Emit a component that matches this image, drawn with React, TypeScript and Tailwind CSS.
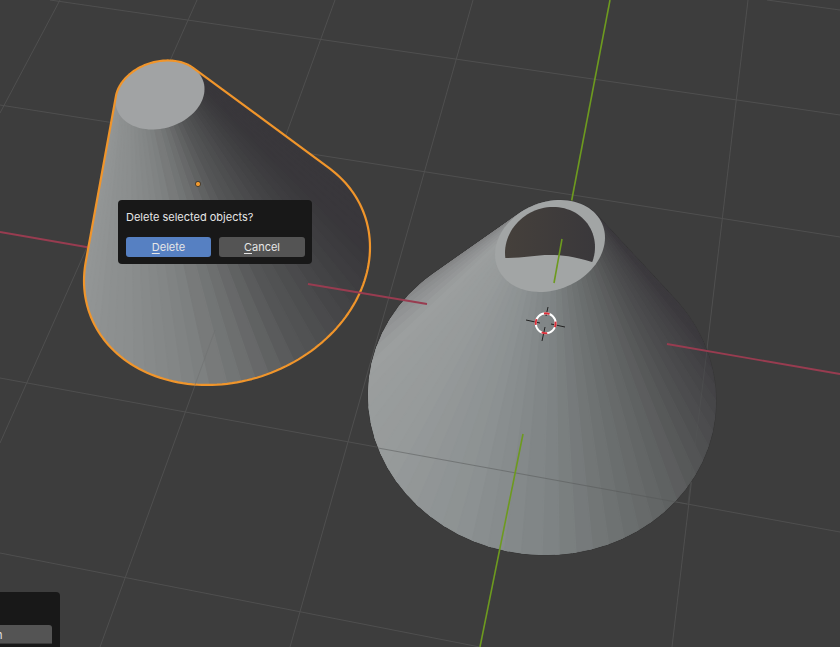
import React from "react";

type Pt = [number, number];
type Ell = { cx: number; cy: number; a: number; b: number; c: number };
type Stop = [number, number, number, number];

const at = (e: Ell, t: number): Pt => [e.cx + e.a * Math.cos(t), e.cy + e.b * Math.cos(t) + e.c * Math.sin(t)];

const ellipsePath = (e: Ell) => {
  const pts: string[] = [];
  for (let i = 0; i < 96; i++) {
    const [x, y] = at(e, (i / 96) * Math.PI * 2);
    pts.push(`${x.toFixed(2)},${y.toFixed(2)}`);
  }
  return pts.join(" ");
};

// monotone chain, gives the outline of the cone
const hull = (points: Pt[]) => {
  const p = [...points].sort((u, v) => u[0] - v[0] || u[1] - v[1]);
  const cross = (o: Pt, u: Pt, v: Pt) => (u[0] - o[0]) * (v[1] - o[1]) - (u[1] - o[1]) * (v[0] - o[0]);
  const lo: Pt[] = [];
  for (const q of p) {
    while (lo.length > 1 && cross(lo[lo.length - 2], lo[lo.length - 1], q) <= 0) lo.pop();
    lo.push(q);
  }
  const up: Pt[] = [];
  for (const q of [...p].reverse()) {
    while (up.length > 1 && cross(up[up.length - 2], up[up.length - 1], q) <= 0) up.pop();
    up.push(q);
  }
  return [...lo.slice(0, -1), ...up.slice(0, -1)].map((q) => `${q[0].toFixed(2)},${q[1].toFixed(2)}`).join(" ");
};

const shade = (stops: Stop[], deg: number) => {
  let d = deg;
  while (d < -60) d += 360;
  while (d >= 300) d -= 360;
  for (let i = 0; i < stops.length - 1; i++) {
    const [d0, r0, g0, b0] = stops[i];
    const [d1, r1, g1, b1] = stops[i + 1];
    if (d >= d0 && d <= d1) {
      const k = (d - d0) / (d1 - d0);
      return `rgb(${Math.round(r0 + (r1 - r0) * k)},${Math.round(g0 + (g1 - g0) * k)},${Math.round(b0 + (b1 - b0) * k)})`;
    }
  }
  return "rgb(58,56,60)";
};

const leftStops: Stop[] = [
  [-60, 58, 56, 60],
  [5, 57, 55, 59],
  [30, 66, 66, 68],
  [60, 85, 86, 87],
  [80, 107, 109, 109],
  [100, 127, 130, 130],
  [130, 138, 141, 141],
  [160, 145, 148, 148],
  [195, 152, 155, 155],
  [240, 120, 120, 122],
  [300, 58, 56, 60],
];

const rightStops: Stop[] = [
  [-60, 60, 58, 62],
  [-20, 60, 58, 62],
  [15, 76, 76, 78],
  [40, 94, 96, 96],
  [65, 110, 114, 114],
  [90, 128, 133, 134],
  [115, 140, 145, 146],
  [150, 150, 154, 154],
  [190, 156, 159, 159],
  [240, 120, 120, 122],
  [300, 60, 58, 62],
];

const Cone = ({ top, base, stops, clip, n = 64 }: { top: Ell; base: Ell; stops: Stop[]; clip: string; n?: number }) => {
  const step = (Math.PI * 2) / n;
  const facets = Array.from({ length: n }, (_, i) => {
    const t0 = i * step;
    const t1 = t0 + step;
    const mid = (t0 + t1) / 2;
    // each facet runs a little under the next one so no seam shows
    const pts = [at(top, t0), at(top, t1 + 0.02), at(base, t1 + 0.02), at(base, t0)];
    return {
      key: i,
      order: Math.sin(mid),
      pts: pts.map((q) => `${q[0].toFixed(2)},${q[1].toFixed(2)}`).join(" "),
      color: shade(stops, (mid * 180) / Math.PI),
    };
  }).sort((u, v) => u.order - v.order);
  return (
    <g clipPath={`url(#${clip})`}>
      {facets.map((f) => (
        <polygon key={f.key} points={f.pts} fill={f.color} stroke={f.color} strokeWidth={1.4} strokeLinejoin="round" />
      ))}
    </g>
  );
};

const outlinePoints = (top: Ell, base: Ell) => {
  const out: Pt[] = [];
  for (let i = 0; i < 180; i++) {
    const t = (i / 180) * Math.PI * 2;
    out.push(at(top, t), at(base, t));
  }
  return hull(out);
};

const leftTop: Ell = { cx: 160, cy: 95, a: 44.5, b: -6, c: 34 };
const leftBase: Ell = { cx: 227, cy: 264, a: 143, b: -16.8, c: 119.8 };
const rightTop: Ell = { cx: 550, cy: 246, a: 55, b: -8.4, c: 45.2 };
const rightHole: Ell = { cx: 550, cy: 250, a: 45, b: -3, c: 43 };
const rightBase: Ell = { cx: 542, cy: 398, a: 174, b: 3, c: 157 };

const leftOutline = outlinePoints(leftTop, leftBase);
const rightOutline = outlinePoints(rightTop, rightBase);

const gridLines: [number, number, number, number][] = [
  [50, 0, 840, 115],
  [767, 0, 840, 10],
  [0, 105, 840, 237],
  [0, 378, 840, 532],
  [0, 553, 480, 647],
  [60, 0, 0, 113],
  [197, 0, 0, 443],
  [335, 0, 100, 647],
  [473, 0, 290, 647],
  [748, 0, 672, 647],
];

const Viewport = () => (
  <svg className="absolute inset-0 block" width={840} height={647} viewBox="0 0 840 647">
    <defs>
      <clipPath id="leftHull">
        <polygon points={leftOutline} />
      </clipPath>
      <clipPath id="rightHull">
        <polygon points={rightOutline} />
      </clipPath>
      <clipPath id="holeClip">
        <path d="M490 195H610V262H592C573 256 562 255 550 255C535 255 523 258 507 258H490Z" />
      </clipPath>
      <linearGradient id="holeFill" x1="0" y1="0" x2="1" y2="0">
        <stop offset="0" stopColor="#45403b" />
        <stop offset="1" stopColor="#3a383b" />
      </linearGradient>
    </defs>

    {gridLines.map(([x1, y1, x2, y2], i) => (
      <line key={i} x1={x1} y1={y1} x2={x2} y2={y2} stroke="#4f4f4f" strokeWidth={1} />
    ))}
    <line x1={610} y1={0} x2={571} y2={204} stroke="#6d9a1f" strokeWidth={1.6} />
    <line x1={0} y1={232} x2={92} y2={248} stroke="#983c50" strokeWidth={1.8} />

    {/* selected cone */}
    <Cone top={leftTop} base={leftBase} stops={leftStops} clip="leftHull" />
    <polygon points={ellipsePath(leftTop)} fill="#a1a3a4" />
    <polygon points={leftOutline} fill="none" stroke="#f0952b" strokeWidth={2.2} strokeLinejoin="round" />
    <line x1={215} y1={330} x2={195} y2={385} stroke="#6e7070" strokeWidth={1} opacity={0.5} />
    <circle cx={198} cy={184} r={2.6} fill="#f29a2e" stroke="#2c2c2c" strokeWidth={0.8} />

    {/* hollow cone */}
    <polygon points={rightOutline} fill="none" stroke="#383838" strokeWidth={1.2} strokeLinejoin="round" />
    <Cone top={rightTop} base={rightBase} stops={rightStops} clip="rightHull" />
    <polygon points={ellipsePath(rightTop)} fill="#a2a5a5" />
    <polygon points={ellipsePath(rightHole)} fill="url(#holeFill)" clipPath="url(#holeClip)" />

    <line x1={378} y1={448} x2={687} y2={504} stroke="#555757" strokeWidth={1} opacity={0.5} />
    <line x1={707} y1={350} x2={688} y2={503} stroke="#555757" strokeWidth={1} opacity={0.4} />

    <line x1={308} y1={284} x2={427} y2={304} stroke="#983c50" strokeWidth={1.8} />
    <line x1={667} y1={344} x2={840} y2={374} stroke="#983c50" strokeWidth={1.8} />
    <line x1={562} y1={239} x2={554} y2={283} stroke="#6d9a1f" strokeWidth={1.6} />
    <line x1={523} y1={434} x2={480} y2={647} stroke="#6d9a1f" strokeWidth={1.6} />

    {/* 3d cursor */}
    <g stroke="#222222" strokeWidth={1}>
      <line x1={548} y1={307} x2={546} y2={316} />
      <line x1={545} y1={327} x2={542} y2={341} />
      <line x1={526} y1={320} x2={540} y2={323} />
      <line x1={551} y1={324} x2={565} y2={327} />
    </g>
    <circle cx={545.7} cy={323.3} r={10} fill="none" stroke="#ffffff" strokeWidth={2} />
    <circle cx={545.7} cy={323.3} r={10} fill="none" stroke="#d9303a" strokeWidth={2} strokeDasharray="5.7 10" transform="rotate(-100 545.7 323.3)" />
  </svg>
);

export default function App() {
  return (
    <div className="relative h-[647px] w-[840px] overflow-hidden bg-[#3d3d3d] font-['Inter',sans-serif]">
      <Viewport />

      <div className="absolute left-[118px] top-[200px] flex h-16 w-[194px] flex-col rounded-[4px] bg-[#181818] pl-2 pt-[10px]">
        <p className="text-[11px] leading-[14px] text-[#e6e6e6]">Delete selected objects?</p>
        <div className="mt-[13px] flex gap-2">
          <button className="h-5 w-[85px] rounded-[3px] bg-[#5680c2] text-[11px] leading-5 text-[#e6e6e6]">
            <span className="underline underline-offset-2">D</span>elete
          </button>
          <button className="h-5 w-[86px] rounded-[3px] bg-[#545454] text-[11px] leading-5 text-[#e6e6e6]">
            <span className="underline underline-offset-2">C</span>ancel
          </button>
        </div>
      </div>

      <div className="absolute bottom-0 left-0 h-[55px] w-[60px] rounded-tr-[4px] bg-[#181818] pt-[33px]">
        <div className="h-[19px] w-[52px] overflow-hidden rounded-tr-[3px] border-b border-[#3a3a3a] bg-[#545454] text-[11px] leading-[20px] text-[#e6e6e6]">
          <span className="-ml-[4px] block">n</span>
        </div>
      </div>
    </div>
  );
}
